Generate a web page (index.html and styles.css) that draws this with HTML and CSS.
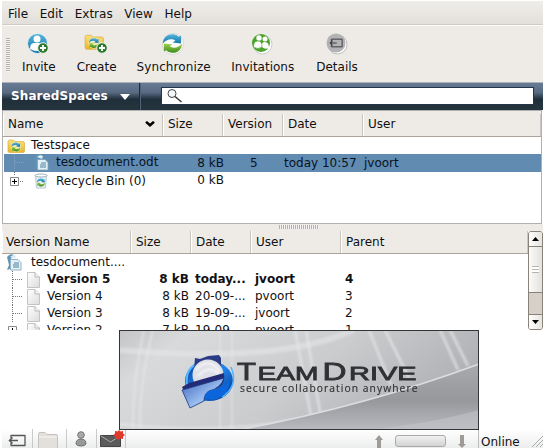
FILE: index.html
```html
<!DOCTYPE html>
<html lang="en">
<head>
<meta charset="utf-8">
<title>TeamDrive</title>
<link rel="stylesheet" href="styles.css">
</head>
<body>
<svg class="defs" width="0" height="0" aria-hidden="true">
  <defs>
    <linearGradient id="blue" x1="0" y1="0" x2="0" y2="1"><stop offset="0" stop-color="#55b4dc"/><stop offset="1" stop-color="#1579ad"/></linearGradient>
    <linearGradient id="green" x1="0" y1="0" x2="0" y2="1"><stop offset="0" stop-color="#9fd24a"/><stop offset="1" stop-color="#3d8a1e"/></linearGradient>
    <linearGradient id="yellow" x1="0" y1="0" x2="0" y2="1"><stop offset="0" stop-color="#fbe27c"/><stop offset="1" stop-color="#e8b52c"/></linearGradient>
    <linearGradient id="page" x1="0" y1="0" x2="1" y2="1"><stop offset="0" stop-color="#fff"/><stop offset="1" stop-color="#dcdcdc"/></linearGradient>
    <symbol id="plus" viewBox="0 0 12 12"><circle cx="6" cy="6" r="5.3" fill="#2d7a2f" stroke="#e9f1e6"/><path d="M6 3v6M3 6h6" stroke="#fff" stroke-width="1.8"/></symbol>
    <symbol id="swirl" viewBox="0 0 22 22">
      <path d="M1 11C1 4 7 0 13 1.500q3 .5 4.500 2.500L20 2.500V11l-9-1 3-2C10 5 4 7 1 11z" fill="url(#blue)"/>
      <path d="M21 11c0 7-6 11-12 9.500q-3-.5-4.500-2.500L2 19.500V11l9 1-3 2c4 3 10 1 13-3z" fill="url(#green)"/>
    </symbol>
    <symbol id="folder" viewBox="0 0 18 14">
      <path d="M1 2.500Q1 1 2.500 1h4l1.500 1.500h8Q17.500 2.500 17.500 4v8q0 1.500-1.500 1.500H2.500Q1 13.500 1 12z" fill="url(#yellow)" stroke="#d9a62d" stroke-width=".6"/>
      <circle cx="9" cy="8" r="5" fill="#f6f3cf" opacity=".8"/>
      <use href="#swirl" x="4" y="3" width="10" height="10"/>
    </symbol>
    <symbol id="doc" viewBox="0 0 16 17">
      <path d="M1 3Q4-1 8 1L4 6v9l-3 1 2-5z" fill="#5d94b5"/>
      <path d="M4.500 5.500h7.500l3 3V16H4.500z" fill="#e3f0f6" stroke="#7da3b6" stroke-width=".8"/>
      <path d="M4 3l3-2 3 1-1 3z" fill="#dcebf2"/>
      <path d="M8 9h5M7 11h6M7 13h6" stroke="#4e82a0"/>
    </symbol>
    <symbol id="bin" viewBox="0 0 14 16">
      <path d="M1.500 2.500h11L11.500 15h-9z" fill="#e9f1f5" stroke="#b9c8d1"/>
      <ellipse cx="7" cy="2.500" rx="6" ry="1.500" fill="#fff" stroke="#9fb1bc"/>
      <use href="#swirl" x="2.500" y="5" width="9" height="9"/>
    </symbol>
    <symbol id="file" viewBox="0 0 13 16"><path d="M.5.5H8L12.500 5v10.500H.5z" fill="url(#page)" stroke="#c4c4c4"/><path d="M8 .5V5h4.500" fill="#f2f2f2" stroke="#bbb"/></symbol>
    <symbol id="box" viewBox="0 0 9 9"><path d="M.5.5h8v8h-8z" fill="#fff" stroke="#888"/><path d="M2 4.500h5M4.500 2v5" stroke="#000"/></symbol>
    <symbol id="exit" viewBox="0 0 20 13"><path d="M4 4V1.500h14v10H4V9" fill="none" stroke="currentColor" stroke-width="1.300" stroke-linejoin="round"/><path d="M2.500 6.500H11M5.500 3.500l-3 3 3 3" fill="none" stroke="currentColor" stroke-width="1.500"/></symbol>
  </defs>
</svg>
<div class="window">
  <nav class="menu"><span>File</span><span>Edit</span><span>Extras</span><span>View</span><span>Help</span></nav>

  <div class="toolbar">
    <i class="grip"></i>
    <div class="tool invite">
      <svg width="24" height="22" viewBox="0 0 24 22"><circle cx="11.500" cy="10.500" r="10" fill="url(#blue)" stroke="#e4eef3"/><circle cx="11" cy="6" r="3.500" fill="#fff"/><path d="M4 16q0-6 4-6h5q4 0 4 6-6 4-13 0z" fill="#fff"/><use href="#plus" x="11" y="9" width="12" height="12"/></svg>
      <span>Invite</span></div>
    <div class="tool create">
      <svg width="24" height="22" viewBox="0 0 24 22"><use href="#folder" x="0" y="1" width="20" height="16"/><use href="#plus" x="12" y="9" width="12" height="12"/></svg>
      <span>Create</span></div>
    <div class="tool sync">
      <svg width="24" height="22" viewBox="0 0 24 22"><circle cx="12" cy="11" r="10.500" fill="#fff" stroke="#d6d6d2"/><use href="#swirl" x="1" y="0" width="21" height="21"/></svg>
      <span>Synchronize</span></div>
    <div class="tool invitations">
      <svg width="24" height="22" viewBox="0 0 24 22"><circle cx="12.500" cy="11.500" r="9.500" fill="#fff" stroke="#ccc"/><circle cx="11" cy="10" r="9" fill="#4ba32a"/><circle cx="9" cy="5" r="2.700" fill="#fff"/><circle cx="15" cy="6" r="2.500" fill="#fff"/><path d="M12 14q-1-5 3-5t4 6q-4 2-7-1z" fill="#fff"/><path d="M3.500 14q0-6 4-6 5 0 4.500 6-4 3-8.500 0z" fill="#fff" stroke="#4ba32a" stroke-width=".6"/></svg>
      <span>Invitations</span></div>
    <div class="tool details">
      <svg width="24" height="22" viewBox="0 0 24 22"><circle cx="12.500" cy="11.500" r="9.500" fill="#fff" stroke="#bbb"/><circle cx="11" cy="10" r="9.500" fill="#b3b3b5"/><g color="#3d3d40"><use href="#exit" x="3" y="5" width="16" height="10"/></g></svg>
      <span>Details</span></div>
  </div>

  <div class="spacebar">
    <div class="picker">SharedSpaces<i class="caret"></i></div>
    <div class="search"><svg width="22" height="16" viewBox="0 0 22 16"><circle cx="10" cy="5.500" r="4" fill="#f5f8fa" stroke="#444"/><path d="M13 8.500l6.500 5.500" stroke="#333" stroke-width="1.500"/></svg></div>
  </div>

  <section class="spaces">
    <div class="head cols"><span>Name<svg class="chev" width="10" height="6" viewBox="0 0 10 6"><path d="M.5 1l1.500-1 3 2.500L8 0l1.500 1v1L5 6 .5 2z"/></svg></span><span>Size</span><span>Version</span><span>Date</span><span>User</span></div>
    <div class="row cols"><div class="name top"><svg width="18" height="14"><use href="#folder"/></svg>Testspace</div></div>
    <div class="row cols selected"><div class="name"><i class="branch light"></i><svg width="16" height="17"><use href="#doc"/></svg>tesdocument.odt</div><b>8 kB</b><span>5</span><span>today 10:57</span><span>jvoort</span></div>
    <div class="row cols"><div class="name"><svg class="expander" width="20" height="17"><path d="M9.500 0v4" stroke="#777" stroke-dasharray="1 1"/><path d="M15 9.500h4" stroke="#777" stroke-dasharray="1 1"/><use href="#box" x="5" y="5" width="9" height="9"/></svg><svg width="16" height="16"><use href="#bin"/></svg>Recycle Bin (0)</div><b>0 kB</b></div>
  </section>

  <div class="splitter"><i></i></div>

  <section class="versions">
    <div class="list">
      <div class="head cols"><span>Version Name</span><span>Size</span><span>Date</span><span>User</span><span>Parent</span></div>
      <div class="row cols"><div class="name top"><svg width="16" height="17"><use href="#doc"/></svg>tesdocument....</div></div>
      <div class="row cols current"><div class="name"><i class="branch"></i><svg width="13" height="16"><use href="#file"/></svg>Version 5</div><b>8 kB</b><span>today...</span><span>jvoort</span><span>4</span></div>
      <div class="row cols"><div class="name"><i class="branch"></i><svg width="13" height="16"><use href="#file"/></svg>Version 4</div><b>8 kB</b><span>20-09-...</span><span>pvoort</span><span>3</span></div>
      <div class="row cols"><div class="name"><i class="branch"></i><svg width="13" height="16"><use href="#file"/></svg>Version 3</div><b>8 kB</b><span>19-09-...</span><span>jvoort</span><span>2</span></div>
      <div class="row cols"><div class="name"><svg class="expander" width="18" height="17"><use href="#box" x="2" y="4" width="9" height="9"/></svg><svg width="13" height="16"><use href="#file"/></svg>Version 2</div><b>7 kB</b><span>19-09-...</span><span>pvoort</span><span>1</span></div>
    </div>
    <div class="scroll">
      <div class="btn"><svg width="7" height="4"><path d="M0 4l3.500-4L7 4z"/></svg></div>
      <div class="thumb"><i></i></div>
      <div class="track"></div>
      <div class="btn"><svg width="7" height="4"><path d="M0 0h7L3.500 4z"/></svg></div>
    </div>
  </section>

  <footer class="status">
    <div class="cell c1"><svg width="20" height="13"><use href="#exit"/></svg></div>
    <div class="cell c2"><svg width="20" height="17" viewBox="0 0 20 17"><path d="M.5 2q0-1.500 1.500-1.500h5l2 2h9q1.500 0 1.500 1.500v12q0 1-1 1H1.500q-1 0-1-1z" fill="#e3e0dc" stroke="#c6c2be"/><path d="M1 5h18" stroke="#f7f6f4"/></svg></div>
    <div class="cell c3"><svg width="12" height="16" viewBox="0 0 12 16"><circle cx="6" cy="4" r="3.300" fill="#a9a9a9" stroke="#777"/><path d="M1 13q0-5 5-5t5 5q-1 2-5 2t-5-2z" fill="#999" stroke="#707070"/></svg></div>
    <div class="cell c4"><svg width="26" height="17" viewBox="0 0 26 17"><path d="M.5 5.500h20v11H.5z" fill="#5b5b5b" stroke="#444"/><path d="M1 6l9.500 6L20 6" fill="none" stroke="#aaa"/><path d="M19 0l1.500 1.500L23 1v2.500l2 1.500-2 1.500V9l-2.500-.5L19 10l-1.500-1.500L15 9V6.500L13.500 5 15 3.500V1l2.500.5z" fill="#df3a2b"/></svg></div>
    <div class="rest">
      <svg width="8" height="14" viewBox="0 0 8 14"><path d="M4 0l4 5H6v9H2V5H0z" fill="#a19b97"/></svg>
      <i class="bar"></i>
      <svg width="8" height="14" viewBox="0 0 8 14"><path d="M4 13l4-4H6V0H2v9H0z" fill="#a19b97"/></svg>
    </div>
    <div class="online">Online</div>
    <svg class="resize" width="11" height="11"><path d="M0 11L11 0M4 11l7-7M8 11l3-3" stroke="#aaa"/></svg>
  </footer>

  <svg class="splash" width="360" height="100" viewBox="0 0 360 100">
    <defs>
      <linearGradient id="bg" x1="0" y1="0" x2="1" y2=".35"><stop offset="0" stop-color="#c3c4c6"/><stop offset=".18" stop-color="#d9dadc"/><stop offset=".6" stop-color="#cbccce"/><stop offset="1" stop-color="#b0b1b4"/></linearGradient>
      <linearGradient id="band" x1="0" y1="0" x2="0" y2="1"><stop offset="0" stop-color="#a9aaad"/><stop offset=".55" stop-color="#97989c"/><stop offset="1" stop-color="#b9babf"/></linearGradient>
      <linearGradient id="ring" x1="0" y1="0" x2="1" y2="1"><stop offset="0" stop-color="#0b3a94"/><stop offset=".5" stop-color="#1f86ee"/><stop offset="1" stop-color="#062a79"/></linearGradient>
      <linearGradient id="flap" x1="0" y1="0" x2="1" y2="1"><stop offset="0" stop-color="#3c62bc"/><stop offset=".6" stop-color="#9cc0f0"/><stop offset="1" stop-color="#4a78cc"/></linearGradient>
      <filter id="soft"><feGaussianBlur stdDeviation=".8"/></filter>
    </defs>
    <rect width="360" height="100" fill="url(#bg)"/>
    <g filter="url(#soft)" fill="none" stroke="#e6e7e9">
      <path d="M0 20Q160 34 235 0" stroke-width="6" opacity=".55"/>
      <path d="M25 0Q13 55 14 100M34 0Q20 55 21 100" stroke-width="2" opacity=".7"/>
      <path d="M101 0v100M113 0v100" stroke-width="2" opacity=".55"/>
      <path d="M176 0l17 92M187 0l15 88M250 0l22 55M266 0l24 48M321 0l18 40M331 0l18 36" stroke-width="3" opacity=".65"/>
      <path d="M0 94Q100 105 180 89" stroke-width="3" opacity=".6"/>
    </g>
    <path d="M120 100Q250 75 360 34V100z" fill="url(#band)"/>
    <path d="M120 100Q250 75 360 34" fill="none" stroke="#dcdde0" stroke-width="1.500"/>
    <path d="M245 100Q310 94 360 80V100z" fill="#c2c3c9" opacity=".6"/>
    <ellipse cx="90" cy="51" rx="24" ry="20" fill="url(#ring)"/>
    <path d="M112 37Q120 56 103 67" fill="none" stroke="#49b4ff" stroke-width="1.500"/>
    <path d="M68 55Q66 40 77 34" fill="none" stroke="#53b9ff" stroke-width="2"/>
    <path d="M74 50l2-22 5 1 8-3 11-1 2 3v17z" fill="#2b3c86"/>
    <circle cx="89" cy="45" r="15.500" fill="#dfe0e7"/>
    <path d="M77 40q12-14 24 1M79 46q11-12 21-2" fill="none" stroke="#f6f6fa" stroke-width="2" filter="url(#soft)"/>
    <path d="M63 57l7-4 35-10q2 14-11 16l-27 6z" fill="#242a76"/>
    <path d="M63 60l42-12q-3 10-15 13-5 3-5 10L71 78z" fill="url(#flap)" stroke="#16357e" stroke-width=".8"/>
    <path d="M86 68q0-8 9-8 8-1 15-10 1 12-8 17-7 5-16 1z" fill="#0b66de"/>
    <g fill="#303134" font-family="Liberation Sans, sans-serif" stroke="#303134" stroke-width=".8">
      <text x="118" y="50" font-size="23" textLength="19" lengthAdjust="spacingAndGlyphs">T</text>
      <text x="138.500" y="50" font-size="19" textLength="61" lengthAdjust="spacingAndGlyphs">EAM</text>
      <text x="203.500" y="50" font-size="23" textLength="24" lengthAdjust="spacingAndGlyphs">D</text>
      <text x="230" y="50" font-size="19" textLength="67.500" lengthAdjust="spacingAndGlyphs">RIVE</text>
    </g>
    <text x="121" y="62" textLength="177.500" font-family="Open Sans, sans-serif" font-size="10.300" fill="#303134" stroke="#303134" stroke-width=".15">secure collaboration anywhere</text>
    <rect x=".5" y=".5" width="359" height="99" fill="none" stroke="#333437"/>
  </svg>
</div>
</body>
</html>
```
FILE: styles.css
```css
* { box-sizing: border-box; }
body { margin: 0; background: #fff; }
.defs { position: absolute; }
.window {
  position: relative; width: 543px; height: 448px; overflow: hidden;
  padding: 1px 0 0 2px; display: flex; flex-direction: column;
  font: 12px/17px "DejaVu Sans", sans-serif; color: #111; white-space: nowrap;
}
svg { display: block; flex: none; }
i { font-style: normal; display: block; flex: none; }
b { font-weight: inherit; }

.menu {
  height: 24px; flex: none; display: flex; gap: 11.7px; padding: 5px 6px 0;
  background: linear-gradient(#efedea, #e3e0db); border-bottom: 1px solid #cfccc7;
}
.toolbar {
  height: 57px; flex: none; display: flex; background: #eeebe7;
  border-top: 1px solid #fbfaf9; padding-left: 4px;
}
.grip { width: 4px; height: 34px; margin-top: 12px; background: repeating-linear-gradient(#b3b0ac 0 1px, #f7f6f4 1px 2px); }
.tool { display: flex; flex-direction: column; align-items: center; padding-top: 7px; gap: 4px; }
.tool svg { margin-left: -1px; }
.invite { margin-left: 12px; }
.create { margin-left: 21px; }
.sync { margin-left: 20px; letter-spacing: .1px; }
.invitations { margin-left: 20.5px; }
.details { margin-left: 22px; }

.spacebar {
  height: 28px; flex: none; display: flex; border-top: 1px solid #aeb3ba;
  background: linear-gradient(#687b95 0, #596b83 35%, #202f3a 60%, #25343c 100%);
}
.picker {
  width: 138px; display: flex; align-items: center; gap: 12px; padding-left: 9px; letter-spacing: .1px;
  color: #fff; font-weight: bold; border-right: 1px solid #1c2b38; box-shadow: 1px 0 #52647a;
}
.caret { border: 5px solid transparent; border-top: 6px solid #fff; border-bottom: 0; }
.search { width: 373px; height: 18px; margin: 4px 0 0 21px; background: #fff; border: 1px solid #253448; }

.cols { display: grid; }
.head { background: #eeebe7; border-bottom: 1px solid #aaa39d; }
.head span { position: relative; border-left: 1px solid #fff; border-right: 1px solid #c9c5c0; }
.row { height: 17px; }
.row b { text-align: right; }
.name { display: flex; align-items: center; }
.chev { position: absolute; right: 7px; top: 7px; }

.spaces { height: 114px; flex: none; margin-right: 1px; border: 1px solid #b0b0b0; background: #fff; }
.spaces .cols { grid-template-columns: 160px 60px 60px 80px 1fr; }
.spaces .head { height: 26px; padding-top: 3px; }
.spaces .head span { line-height: 21px; padding-left: 4px; }
.spaces .row { margin-left: 1px; }
.spaces .row.selected { height: 18px; background: #628bb2; line-height: 18px; color: #06141f; }
.spaces .selected .name { height: 16px; }
.spaces .row b { width: 60px; }
.spaces .row b + span { padding-left: 26px; }
.spaces .name svg:not(.expander) { margin-right: 7px; }
.spaces .name.top { padding-left: 3px; }
.spaces .name.top svg { margin-right: 6px; }
.spaces .expander { margin-left: 1px; margin-right: 8px; }
.spaces .row:last-child { line-height: 16px; }
.branch { position: relative; width: 16px; height: 17px; }
.branch::before { content: ""; position: absolute; left: 10px; top: 0; height: 17px; border-left: 1px dotted #777; }
.branch::after { content: ""; position: absolute; left: 11px; top: 8px; width: 9px; border-top: 1px dotted #777; }
.spaces .branch { width: 29px; }
.light::before, .light::after { border-color: #7fa1c2; }

.splitter { height: 7px; flex: none; background: #eeebe7; }
.splitter i { width: 40px; height: 4px; margin: 1px 0 0 277px; background: repeating-linear-gradient(90deg, #b4b0ac 0 1px, #f4f2f0 1px 2px); }

.versions { height: 99px; flex: none; display: flex; overflow: hidden; }
.list { width: 526px; height: 99px; overflow: hidden; }
.versions .cols { grid-template-columns: 129px 60px 60px 90px 1fr; }
.versions .head { height: 23px; line-height: 22px; }
.versions .head span { padding-left: 4px; }
.versions .head span:first-child { padding-left: 3px; }
.versions .row b { width: 58px; }
.versions .row span { padding-left: 4px; }
.versions .name svg { margin-right: 7px; }
.versions .top svg { margin: 0 9px 0 4px; }
.versions .branch { width: 25px; }
.versions .expander.expander { margin: 0 3px 0 4px; }
.current { font-weight: bold; }

.scroll { width: 15px; display: flex; flex-direction: column; border: 1px solid #88827b; border-radius: 3px; overflow: hidden; }
.btn { height: 14px; display: grid; place-content: center; background: linear-gradient(90deg, #fff, #e7e3de); }
.thumb { height: 47px; border: solid #88827b; border-width: 1px 0; background: linear-gradient(90deg, #fcfbfa, #e5e1dc); display: grid; place-content: center; }
.thumb i { width: 7px; height: 7px; background: repeating-linear-gradient(#b8b3ad 0 1px, #fff 1px 3px); }
.track { flex: 1; background: #d7d0c9; border-bottom: 1px solid #88827b; }

.status { height: 19px; flex: none; margin-top: 99px; display: flex; background: linear-gradient(#fff, #eceeed); }
.cell { border-right: 1px solid #c9c9c9; padding-left: 5px; color: #555; }
.c1 { width: 31px; padding-top: 5px; }
.c2 { width: 34px; padding-top: 3px; }
.c3 { width: 30px; padding: 2px 0 0 8px; }
.c4 { width: 29px; padding: 1px 0 0 3px; }
.rest { width: 353px; display: flex; gap: 12px; justify-content: flex-end; padding: 6px 12px 0 0; border-right: 1px solid #bbb; }
.bar { width: 51px; height: 12px; border: 1px solid #aaa; border-radius: 3px; background: linear-gradient(#f1f1f1, #d3d3d3); }
.online { padding: 5px 0 0 2px; }
.resize { margin: 7px 0 0 auto; }
.splash { position: absolute; left: 119px; top: 330px; }
```
